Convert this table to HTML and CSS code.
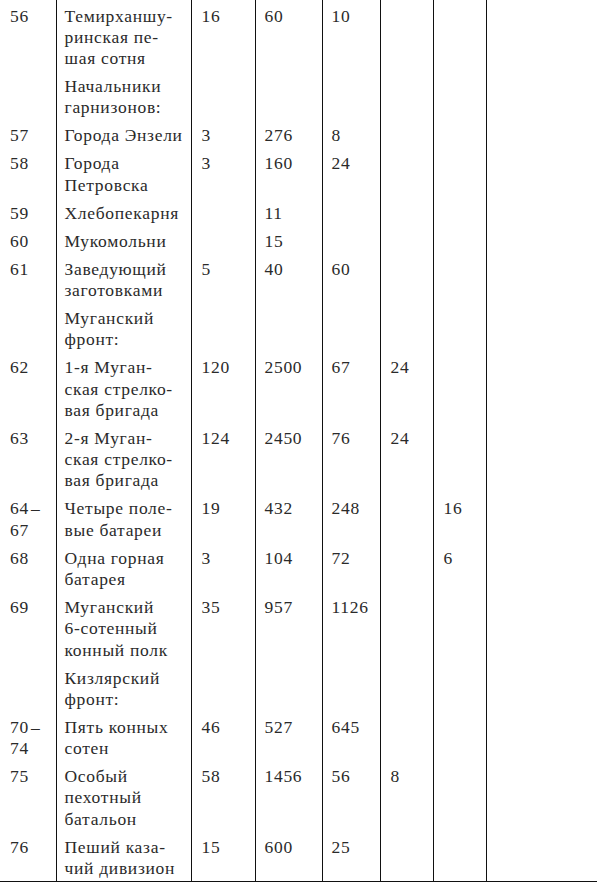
FILE: index.html
```html
<!DOCTYPE html>
<html lang="ru">
<head>
<meta charset="utf-8">
<link rel="stylesheet" href="styles.css">
</head>
<body>
<table class="tbl">
<colgroup>
<col class="c1"><col class="c2"><col class="c3"><col class="c4"><col class="c5"><col class="c6"><col class="c7"><col class="c8">
</colgroup>
<tbody>
<tr><td>56</td><td>Темирханшу-<br>ринская пе-<br>шая сотня</td><td>16</td><td>60</td><td>10</td><td></td><td></td><td></td></tr>
<tr><td></td><td>Начальники<br>гарнизонов:</td><td></td><td></td><td></td><td></td><td></td><td></td></tr>
<tr><td>57</td><td>Города Энзели</td><td>3</td><td>276</td><td>8</td><td></td><td></td><td></td></tr>
<tr><td>58</td><td>Города<br>Петровска</td><td>3</td><td>160</td><td>24</td><td></td><td></td><td></td></tr>
<tr><td>59</td><td>Хлебопекарня</td><td></td><td>11</td><td></td><td></td><td></td><td></td></tr>
<tr><td>60</td><td>Мукомольни</td><td></td><td>15</td><td></td><td></td><td></td><td></td></tr>
<tr><td>61</td><td>Заведующий<br>заготовками</td><td>5</td><td>40</td><td>60</td><td></td><td></td><td></td></tr>
<tr><td></td><td>Муганский<br>фронт:</td><td></td><td></td><td></td><td></td><td></td><td></td></tr>
<tr><td>62</td><td>1-я Муган-<br>ская стрелко-<br>вая бригада</td><td>120</td><td>2500</td><td>67</td><td>24</td><td></td><td></td></tr>
<tr><td>63</td><td>2-я Муган-<br>ская стрелко-<br>вая бригада</td><td>124</td><td>2450</td><td>76</td><td>24</td><td></td><td></td></tr>
<tr><td>64&#8202;–<br>67</td><td>Четыре поле-<br>вые батареи</td><td>19</td><td>432</td><td>248</td><td></td><td>16</td><td></td></tr>
<tr><td>68</td><td>Одна горная<br>батарея</td><td>3</td><td>104</td><td>72</td><td></td><td>6</td><td></td></tr>
<tr><td>69</td><td>Муганский<br>6-сотенный<br>конный полк</td><td>35</td><td>957</td><td>1126</td><td></td><td></td><td></td></tr>
<tr><td></td><td>Кизлярский<br>фронт:</td><td></td><td></td><td></td><td></td><td></td><td></td></tr>
<tr><td>70&#8202;–<br>74</td><td>Пять конных<br>сотен</td><td>46</td><td>527</td><td>645</td><td></td><td></td><td></td></tr>
<tr><td>75</td><td>Особый<br>пехотный<br>батальон</td><td>58</td><td>1456</td><td>56</td><td>8</td><td></td><td></td></tr>
<tr class="last"><td>76</td><td>Пеший каза-<br>чий дивизион</td><td>15</td><td>600</td><td>25</td><td></td><td></td><td></td></tr>
</tbody>
</table>
</body>
</html>
```

FILE: styles.css
```css
html, body {
  margin: 0;
  padding: 0;
  background: #ffffff;
}

.tbl {
  width: 597px;
  table-layout: fixed;
  border-collapse: collapse;
  border-bottom: 1.5px solid #111;
  font-family: "Liberation Serif", "Times New Roman", serif;
  font-size: 17.5px;
  letter-spacing: 0.7px;
  line-height: 21.3px;
  color: #2a2a2a;
}

.c1 { width: 56px; }
.c2 { width: 135px; }
.c3 { width: 64px; }
.c4 { width: 67px; }
.c5 { width: 58px; }
.c6 { width: 53px; }
.c7 { width: 53px; }
.c8 { width: 111px; }

.tbl td {
  vertical-align: top;
  padding: 5.6px 0 1.1px 9px;
  border-left: 1.5px solid #111;
  white-space: nowrap;
}

.tbl td:first-child {
  border-left: none;
  padding-left: 10px;
}

.tbl td:nth-child(2) {
  padding-left: 8px;
}

.tbl td:nth-child(3),
.tbl td:nth-child(6),
.tbl td:nth-child(7) {
  padding-left: 10px;
}

.tbl tr.last td {
  padding-bottom: 1.5px;
}
```
